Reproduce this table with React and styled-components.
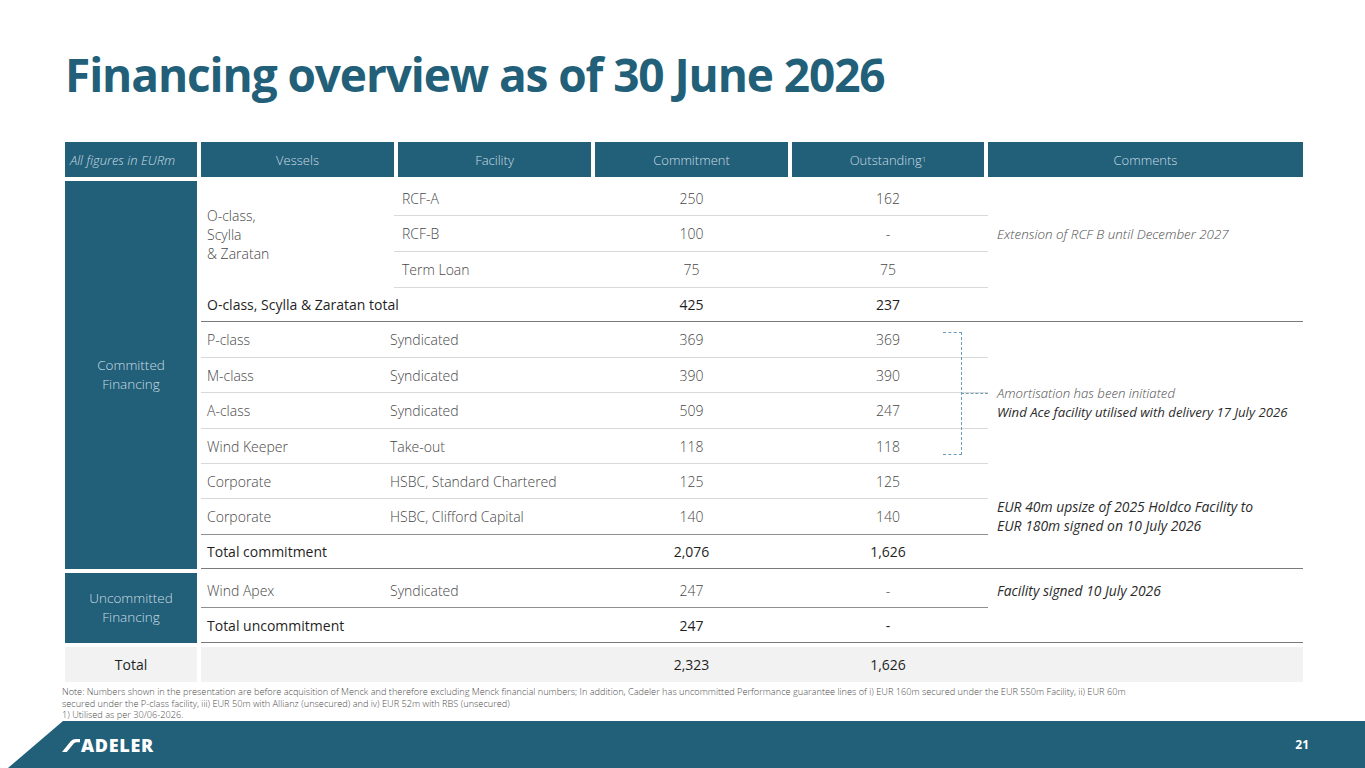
import React from 'react';
import styled, { createGlobalStyle } from 'styled-components';

const BLUE = '#225f78';
const LIGHT_LINE = '#d9d9d9';
const MID_LINE = '#8f8f8f';
const DARK_LINE = '#7a7a7a';

const GlobalStyle = createGlobalStyle`
  * { box-sizing: border-box; }
  html, body { margin: 0; padding: 0; background: #ffffff; }
  body { font-family: "Open Sans", "Liberation Sans", sans-serif; }
`;

const lineColor = (line) =>
  line === 'dark' ? DARK_LINE : line === 'mid' ? MID_LINE : line === 'light' ? LIGHT_LINE : 'transparent';

const App = () => {
  return (
    <>
      <GlobalStyle />
      <Page>
        <Title>Financing overview as of 30 June 2026</Title>

        <HeaderRow>
          <HeadCell $italic $left>All figures in EURm</HeadCell>
          <HeadCell>Vessels</HeadCell>
          <HeadCell>Facility</HeadCell>
          <HeadCell>Commitment</HeadCell>
          <HeadCell>Outstanding<sup>1</sup></HeadCell>
          <HeadCell>Comments</HeadCell>
        </HeaderRow>

        <Section>
          <Label>Committed<br />Financing</Label>
          <Body $rows="35px 36px 36px 34px 36px 35px 36px 35px 35px 36px 34px">
            <Cell $col="1" $row="1 / span 3">O-class,<br />Scylla<br />&amp; Zaratan</Cell>
            <Cell $col="2" $row="1" $line="light" $inset>RCF-A</Cell>
            <Cell $col="3" $row="1" $line="light" $center>250</Cell>
            <Cell $col="4" $row="1" $line="light" $center>162</Cell>
            <Cell $col="2" $row="2" $line="light" $inset>RCF-B</Cell>
            <Cell $col="3" $row="2" $line="light" $center>100</Cell>
            <Cell $col="4" $row="2" $line="light" $center>-</Cell>
            <Cell $col="2" $row="3" $line="light" $inset>Term Loan</Cell>
            <Cell $col="3" $row="3" $line="light" $center>75</Cell>
            <Cell $col="4" $row="3" $line="light" $center>75</Cell>
            <Comment $row="1 / span 3" $size="13.4px">
              <Soft>Extension of RCF B until December 2027</Soft>
            </Comment>

            <Cell $col="1 / span 2" $row="4" $line="dark" $bold>O-class, Scylla &amp; Zaratan total</Cell>
            <Cell $col="3" $row="4" $line="dark" $center $bold>425</Cell>
            <Cell $col="4" $row="4" $line="dark" $center $bold>237</Cell>
            <Cell $col="5" $row="4" $line="dark" />

            {lowerRows.map((r, i) => (
              <React.Fragment key={i}>
                <Cell $col="1" $row={5 + i} $line={r.line}>{r.vessel}</Cell>
                <Cell $col="2" $row={5 + i} $line={r.line}>{r.facility}</Cell>
                <Cell $col="3" $row={5 + i} $line={r.line} $center>{r.commitment}</Cell>
                <Cell $col="4" $row={5 + i} $line={r.line} $center>{r.outstanding}</Cell>
              </React.Fragment>
            ))}
            <Comment $row="5 / span 4" $top="62px">
              <Soft>Amortisation has been initiated</Soft>
              <span>Wind Ace facility utilised with delivery 17 July 2026</span>
            </Comment>
            <Comment $row="9 / span 3" $line="dark" $size="13.9px">
              <span>EUR 40m upsize of 2025 Holdco Facility to</span>
              <span>EUR 180m signed on 10 July 2026</span>
            </Comment>

            <Cell $col="1 / span 2" $row="11" $line="dark" $bold>Total commitment</Cell>
            <Cell $col="3" $row="11" $line="dark" $center $bold>2,076</Cell>
            <Cell $col="4" $row="11" $line="dark" $center $bold>1,626</Cell>

            <Bracket>
              <BracketTick />
            </Bracket>
          </Body>
        </Section>

        <Section>
          <Label>Uncommitted<br />Financing</Label>
          <Body $rows="35px 35px">
            <Cell $col="1" $row="1" $line="mid">Wind Apex</Cell>
            <Cell $col="2" $row="1" $line="mid">Syndicated</Cell>
            <Cell $col="3" $row="1" $line="mid" $center>247</Cell>
            <Cell $col="4" $row="1" $line="mid" $center>-</Cell>
            <Comment $row="1" $size="13.9px">
              <span>Facility signed 10 July 2026</span>
            </Comment>
            <Cell $col="1 / span 2" $row="2" $line="dark" $bold>Total uncommitment</Cell>
            <Cell $col="3" $row="2" $line="dark" $center $bold>247</Cell>
            <Cell $col="4" $row="2" $line="dark" $center $bold>-</Cell>
            <Cell $col="5" $row="2" $line="dark" />
          </Body>
        </Section>

        <Section>
          <TotalLabel>Total</TotalLabel>
          <Body $rows="35px" $shaded>
            <Cell $col="3" $row="1" $center $bold>2,323</Cell>
            <Cell $col="4" $row="1" $center $bold>1,626</Cell>
          </Body>
        </Section>

        <Notes>
          Note: Numbers shown in the presentation are before acquisition of Menck and therefore excluding Menck financial numbers; In addition, Cadeler has uncommitted Performance guarantee lines of i) EUR 160m secured under the EUR 550m Facility, ii) EUR 60m<br />
          secured under the P-class facility, iii) EUR 50m with Allianz (unsecured) and iv) EUR 52m with RBS (unsecured)<br />
          1) Utilised as per 30/06-2026.
        </Notes>

        <Footer>
          <Logo>
            <svg width="18" height="13" viewBox="0 0 18 13">
              <path d="M0 13 L4.8 13 L11.8 4.6 Q13.1 3.3 14.8 3.3 L18 3.3 L18 0 L14 0 Q10.6 0 8.7 2.3 Z" fill="#ffffff" />
            </svg>
            <LogoText>ADELER</LogoText>
          </Logo>
          <PageNumber>21</PageNumber>
        </Footer>
      </Page>
    </>
  );
};

const lowerRows = [
  { vessel: 'P-class', facility: 'Syndicated', commitment: '369', outstanding: '369', line: 'light' },
  { vessel: 'M-class', facility: 'Syndicated', commitment: '390', outstanding: '390', line: 'light' },
  { vessel: 'A-class', facility: 'Syndicated', commitment: '509', outstanding: '247', line: 'light' },
  { vessel: 'Wind Keeper', facility: 'Take-out', commitment: '118', outstanding: '118', line: 'light' },
  { vessel: 'Corporate', facility: 'HSBC, Standard Chartered', commitment: '125', outstanding: '125', line: 'light' },
  { vessel: 'Corporate', facility: 'HSBC, Clifford Capital', commitment: '140', outstanding: '140', line: 'mid' },
];

const Page = styled.div`
  height: 768px;
  display: flex;
  flex-direction: column;
  padding-left: 65px;
  overflow: hidden;
`;

const Title = styled.h1`
  margin: 47px 0 0 0;
  font-family: "Open Sans", "Liberation Sans", sans-serif;
  font-weight: 700;
  font-size: 46px;
  line-height: 55px;
  color: ${BLUE};
  letter-spacing: -1.1px;
`;

const HeaderRow = styled.div`
  margin-top: 40px;
  width: 1238px;
  display: grid;
  grid-template-columns: 132px 193px 193px 193px 192px 315px;
  column-gap: 4px;
  height: 35px;
`;

const HeadCell = styled.div`
  background: ${BLUE};
  color: #c9dde6;
  font-size: 13px;
  font-weight: 300;
  font-style: ${(p) => (p.$italic ? 'italic' : 'normal')};
  display: flex;
  align-items: center;
  justify-content: ${(p) => (p.$left ? 'flex-start' : 'center')};
  padding-left: ${(p) => (p.$left ? '5px' : '0')};

  sup {
    font-size: 8px;
    line-height: 0;
    position: relative;
    top: -1px;
    vertical-align: super;
  }
`;

const Section = styled.div`
  margin-top: 4px;
  width: 1238px;
  display: flex;
  gap: 4px;
`;

const Label = styled.div`
  width: 132px;
  flex-shrink: 0;
  background: ${BLUE};
  color: #c9dde6;
  font-size: 13.5px;
  font-weight: 300;
  line-height: 19px;
  text-align: center;
  display: flex;
  align-items: center;
  justify-content: center;
`;

const TotalLabel = styled(Label)`
  background: #f2f2f2;
  color: #1f1f1f;
  font-size: 14px;
  font-weight: 400;
`;

const Body = styled.div`
  position: relative;
  flex: 1;
  display: grid;
  grid-template-columns: 183px 211px 197px 196px 315px;
  grid-template-rows: ${(p) => p.$rows};
  background: ${(p) => (p.$shaded ? '#f2f2f2' : 'transparent')};
`;

const Cell = styled.div`
  grid-column: ${(p) => p.$col};
  grid-row: ${(p) => p.$row};
  display: flex;
  align-items: center;
  justify-content: ${(p) => (p.$center ? 'center' : 'flex-start')};
  padding-left: ${(p) => (p.$center ? '0' : p.$inset ? '8px' : '6px')};
  padding-right: ${(p) => (p.$center ? '4px' : '0')};
  margin-left: ${(p) => (p.$inset ? '10px' : '0')};
  border-bottom: 1px solid ${(p) => lineColor(p.$line)};
  font-size: 14px;
  line-height: 19px;
  font-weight: ${(p) => (p.$bold ? 400 : 300)};
  color: ${(p) => (p.$bold ? '#1f1f1f' : '#474747')};
  white-space: nowrap;
`;

const Comment = styled.div`
  grid-column: 5;
  grid-row: ${(p) => p.$row};
  display: flex;
  flex-direction: column;
  justify-content: ${(p) => (p.$top ? 'flex-start' : 'center')};
  padding: ${(p) => (p.$top ? `${p.$top} 0 0 9px` : '0 0 0 9px')};
  border-bottom: 1px solid ${(p) => lineColor(p.$line)};
  font-size: ${(p) => p.$size || '13.2px'};
  line-height: 19px;
  font-style: italic;
  font-weight: 400;
  color: #2b2b2b;
  white-space: nowrap;
`;

const Soft = styled.span`
  font-weight: 300;
  color: #4d4d4d;
`;

const Bracket = styled.div`
  position: absolute;
  left: 742px;
  top: 151px;
  width: 19px;
  height: 123px;
  border: 1px dashed #6d9cbb;
  border-left: none;
`;

const BracketTick = styled.div`
  position: absolute;
  left: 18px;
  top: 60px;
  width: 27px;
  border-top: 1px dashed #6d9cbb;
`;

const Notes = styled.div`
  margin: 4px 0 0 -3px;
  font-size: 9.2px;
  line-height: 11.6px;
  font-weight: 300;
  color: #4d4d4d;
  white-space: nowrap;
`;

const Footer = styled.footer`
  margin: auto 0 0 -65px;
  height: 47px;
  flex-shrink: 0;
  background: ${BLUE};
  clip-path: polygon(63px 0, 100% 0, 100% 100%, 8px 100%);
  display: flex;
  align-items: center;
  justify-content: space-between;
  padding: 0 56px 0 62px;
`;

const Logo = styled.div`
  display: flex;
  align-items: flex-end;
  gap: 1px;
  margin-top: 2px;
`;

const LogoText = styled.span`
  color: #ffffff;
  font-family: "Open Sans", "Liberation Sans", sans-serif;
  font-weight: 800;
  font-size: 18px;
  line-height: 13px;
  height: 13px;
  letter-spacing: 0.7px;
  display: flex;
  align-items: center;
`;

const PageNumber = styled.span`
  color: #ffffff;
  font-weight: 700;
  font-size: 12px;
`;

export default App;
